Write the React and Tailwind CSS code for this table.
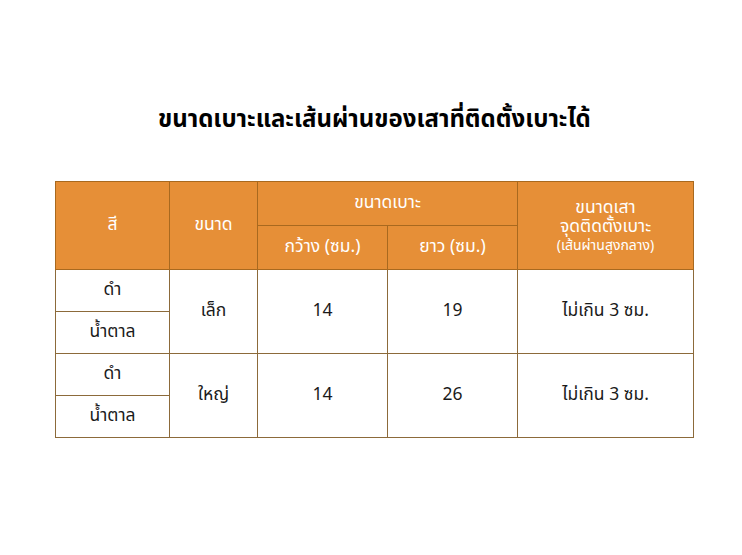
import React from "react";

const rows = [
  { size: "เล็ก", width: "14", length: "19" },
  { size: "ใหญ่", width: "14", length: "26" },
];

export default function App() {
  return (
    <div
      className="w-[742px] h-[555px] bg-white flex flex-col"
      style={{ fontFamily: '"Noto Sans Thai", "Noto Sans", "DejaVu Sans", sans-serif' }}
    >
      <h1 className="mt-[101px] ml-[158px] w-[432px] text-center text-[24px] leading-[38px] font-bold text-black whitespace-nowrap">
        ขนาดเบาะและเส้นผ่านของเสาที่ติดตั้งเบาะได้
      </h1>
      <table className="mt-[42px] ml-[55px] border-collapse table-fixed w-[638px] text-[17.5px]">
        <colgroup>
          <col className="w-[114px]" />
          <col className="w-[88px]" />
          <col className="w-[130px]" />
          <col className="w-[130px]" />
          <col className="w-[176px]" />
        </colgroup>
        <thead className="bg-[#e68f37] text-white">
          <tr className="h-[44px]">
            <th rowSpan={2} className="border border-[#a8691f] font-normal">สี</th>
            <th rowSpan={2} className="border border-[#a8691f] font-normal">ขนาด</th>
            <th colSpan={2} className="border border-[#a8691f] font-normal">ขนาดเบาะ</th>
            <th rowSpan={2} className="border border-[#a8691f] font-normal pt-[2px]">
              <div className="leading-[18px]">ขนาดเสา</div>
              <div className="leading-[20px]">จุดติดตั้งเบาะ</div>
              <div className="text-[14px] leading-[18px]">(เส้นผ่านสูงกลาง)</div>
            </th>
          </tr>
          <tr className="h-[44px]">
            <th className="border border-[#a8691f] font-normal">กว้าง (ซม.)</th>
            <th className="border border-[#a8691f] font-normal">ยาว (ซม.)</th>
          </tr>
        </thead>
        <tbody className="text-[#1a1a1a] text-center">
          {rows.map((r) => (
            <React.Fragment key={r.size}>
              <tr className="h-[42px]">
                <td className="border border-[#8c6a3a]">ดำ</td>
                <td rowSpan={2} className="border border-[#8c6a3a]">{r.size}</td>
                <td rowSpan={2} className="border border-[#8c6a3a]">{r.width}</td>
                <td rowSpan={2} className="border border-[#8c6a3a]">{r.length}</td>
                <td rowSpan={2} className="border border-[#8c6a3a]">ไม่เกิน 3 ซม.</td>
              </tr>
              <tr className="h-[42px]">
                <td className="border border-[#8c6a3a]">น้ำตาล</td>
              </tr>
            </React.Fragment>
          ))}
        </tbody>
      </table>
    </div>
  );
}
